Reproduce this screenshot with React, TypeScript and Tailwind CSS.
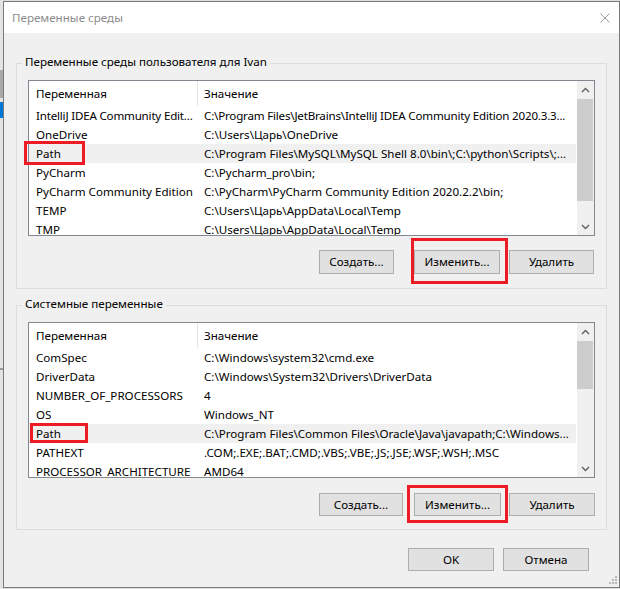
import React from "react";

type Row = [string, string];

const userRows: Row[] = [
  ["IntelliJ IDEA Community Edit...", "C:\\Program Files\\JetBrains\\IntelliJ IDEA Community Edition 2020.3.3..."],
  ["OneDrive", "C:\\Users\\Царь\\OneDrive"],
  ["Path", "C:\\Program Files\\MySQL\\MySQL Shell 8.0\\bin\\;C:\\python\\Scripts\\;..."],
  ["PyCharm", "C:\\Pycharm_pro\\bin;"],
  ["PyCharm Community Edition", "C:\\PyCharm\\PyCharm Community Edition 2020.2.2\\bin;"],
  ["TEMP", "C:\\Users\\Царь\\AppData\\Local\\Temp"],
  ["TMP", "C:\\Users\\Царь\\AppData\\Local\\Temp"],
];

const sysRows: Row[] = [
  ["ComSpec", "C:\\Windows\\system32\\cmd.exe"],
  ["DriverData", "C:\\Windows\\System32\\Drivers\\DriverData"],
  ["NUMBER_OF_PROCESSORS", "4"],
  ["OS", "Windows_NT"],
  ["Path", "C:\\Program Files\\Common Files\\Oracle\\Java\\javapath;C:\\Windows..."],
  ["PATHEXT", ".COM;.EXE;.BAT;.CMD;.VBS;.VBE;.JS;.JSE;.WSF;.WSH;.MSC"],
  ["PROCESSOR_ARCHITECTURE", "AMD64"],
];

function ScrollArrow({ up }: { up: boolean }) {
  return (
    <div className="flex h-[17px] items-center justify-center">
      <svg width="9" height="6" viewBox="0 0 9 6">
        <polyline
          points={up ? "1,5 4.5,1.5 8,5" : "1,1 4.5,4.5 8,1"}
          fill="none"
          stroke="#606060"
          strokeWidth="1.4"
        />
      </svg>
    </div>
  );
}

function ListView({
  rows,
  selected,
  tight,
  thumbClass,
  redClass,
}: {
  rows: Row[];
  selected: number;
  tight: number;
  thumbClass: string;
  redClass: string;
}) {
  return (
    <div className="relative h-[156px] w-[567px] border border-[#828790] bg-white">
      <div className="flex h-full">
        <div className="w-[548px] overflow-hidden">
          <div className="flex h-[25px] leading-[16px]">
            <div className="flex w-[169px] items-center border-r border-[#e5e5e5] pl-[7px]">Переменная</div>
            <div className="flex items-center pl-[6px]">Значение</div>
          </div>
          {rows.map((r, i) => (
            <div
              key={i}
              className={
                (i === selected
                  ? "flex h-[19px] w-[547px] items-center whitespace-nowrap bg-[#f0f0f0] leading-[16px]"
                  : "flex h-[19px] w-[547px] items-center whitespace-nowrap leading-[16px]") +
                (i === tight ? " tracking-[-0.2px]" : "")
              }
            >
              <div className="w-[169px] overflow-hidden pl-[7px]">{r[0]}</div>
              <div className="overflow-hidden pl-[6px]">{r[1]}</div>
            </div>
          ))}
        </div>
        <div className="flex w-[17px] flex-col bg-[#f0f0f0]">
          <ScrollArrow up />
          <div className="flex-1 pt-[1px]">
            <div className={thumbClass} />
          </div>
          <ScrollArrow up={false} />
        </div>
      </div>
      <div className={redClass} />
    </div>
  );
}

function Btn({ cls, children }: { cls: string; children: React.ReactNode }) {
  return <div className={cls}>{children}</div>;
}

export default function App() {
  return (
    <div className="flex h-[589px] w-[620px] overflow-hidden bg-[#dedede] font-['Noto_Sans',sans-serif] text-[11.6px] text-black">
      <div className="flex w-[3px] flex-col">
        <div className="h-[70px] bg-[#e4e4e4]" />
        <div className="h-[28px] bg-[#a9a9a9]" />
        <div className="h-[4px] bg-[#e4e4e4]" />
        <div className="h-[16px] bg-[#0078d7]" />
        <div className="h-[250px] bg-[#e4e4e4]" />
        <div className="h-[2px] bg-[#9a9a9a]" />
        <div className="flex-1 bg-[#e4e4e4]" />
      </div>
      <div className="flex flex-col pt-[1px]">
        <div className="relative flex h-[587px] w-[617px] flex-col border border-[#7a7a7a] bg-[#f0f0f0]">
          <div className="flex h-[31px] items-center justify-between bg-white pl-[8px] pr-[9px]">
            <span className="leading-[16px] text-[#8c8c8c]">Переменные среды</span>
            <svg width="10" height="10" viewBox="0 0 10 10">
              <line x1="0.5" y1="0.5" x2="9.5" y2="9.5" stroke="#9a9a9a" strokeWidth="1" />
              <line x1="9.5" y1="0.5" x2="0.5" y2="9.5" stroke="#9a9a9a" strokeWidth="1" />
            </svg>
          </div>

          <div className="flex flex-col px-[12px]">
            <div className="relative mt-[30px] border border-[#dcdcdc] px-[11px] pb-[14px] pt-[16px]">
              <span className="absolute -top-[10px] left-[5px] bg-[#f0f0f0] px-[3px] leading-[16px]">
                Переменные среды пользователя для Ivan
              </span>
              <ListView
                rows={userRows}
                selected={2}
                tight={0}
                thumbClass="h-[102px] w-[16px] bg-[#cdcdcd]"
                redClass="absolute -left-[5px] top-[60px] h-[24px] w-[61px] border-[3px] border-[#ed1c24]"
              />
              <div className="mt-[14px] flex justify-end pr-[1px] leading-[16px]">
                <Btn cls="flex h-[24px] w-[75px] items-center justify-center border border-[#adadad] bg-[#e1e1e1]">
                  Создать...
                </Btn>
                <div className="relative ml-[20px]">
                  <Btn cls="flex h-[24px] w-[86px] items-center justify-center border border-[#adadad] bg-[#e1e1e1]">
                    Изменить...
                  </Btn>
                  <div className="absolute -left-[3px] -top-[12px] h-[46px] w-[97px] border-[3px] border-[#ed1c24]" />
                </div>
                <Btn cls="ml-[9px] flex h-[24px] w-[85px] items-center justify-center border border-[#adadad] bg-[#e1e1e1]">
                  Удалить
                </Btn>
              </div>
            </div>

            <div className="relative mt-[16px] border border-[#dcdcdc] px-[11px] pb-[13px] pt-[16px]">
              <span className="absolute -top-[10px] left-[5px] bg-[#f0f0f0] px-[3px] leading-[16px]">
                Системные переменные
              </span>
              <ListView
                rows={sysRows}
                selected={4}
                tight={-1}
                thumbClass="h-[48px] w-[16px] bg-[#cdcdcd]"
                redClass="absolute left-[1px] top-[100px] h-[20px] w-[58px] border-[3px] border-[#ed1c24]"
              />
              <div className="mt-[15px] flex justify-end leading-[16px]">
                <Btn cls="flex h-[23px] w-[84px] items-center justify-center border border-[#adadad] bg-[#e1e1e1]">
                  Создать...
                </Btn>
                <div className="relative ml-[11px]">
                  <Btn cls="flex h-[23px] w-[87px] items-center justify-center border border-[#adadad] bg-[#e1e1e1]">
                    Изменить...
                  </Btn>
                  <div className="absolute -left-[7px] -top-[8px] h-[38px] w-[101px] border-[3px] border-[#ed1c24]" />
                </div>
                <Btn cls="ml-[8px] flex h-[23px] w-[86px] items-center justify-center border border-[#adadad] bg-[#e1e1e1]">
                  Удалить
                </Btn>
              </div>
            </div>

            <div className="mt-[18px] flex justify-end pr-[18px] leading-[16px]">
              <Btn cls="flex h-[23px] w-[86px] items-center justify-center border border-[#adadad] bg-[#e1e1e1]">
                OK
              </Btn>
              <Btn cls="ml-[9px] flex h-[23px] w-[86px] items-center justify-center border border-[#adadad] bg-[#e1e1e1]">
                Отмена
              </Btn>
            </div>
          </div>

          <svg className="absolute bottom-[3px] right-[2px]" width="8" height="8" viewBox="0 0 8 8">
            <rect x="6" y="0" width="2" height="2" fill="#b8b8b8" />
            <rect x="3" y="3" width="2" height="2" fill="#b8b8b8" />
            <rect x="6" y="3" width="2" height="2" fill="#b8b8b8" />
            <rect x="0" y="6" width="2" height="2" fill="#b8b8b8" />
            <rect x="3" y="6" width="2" height="2" fill="#b8b8b8" />
            <rect x="6" y="6" width="2" height="2" fill="#b8b8b8" />
          </svg>
        </div>
      </div>
    </div>
  );
}
